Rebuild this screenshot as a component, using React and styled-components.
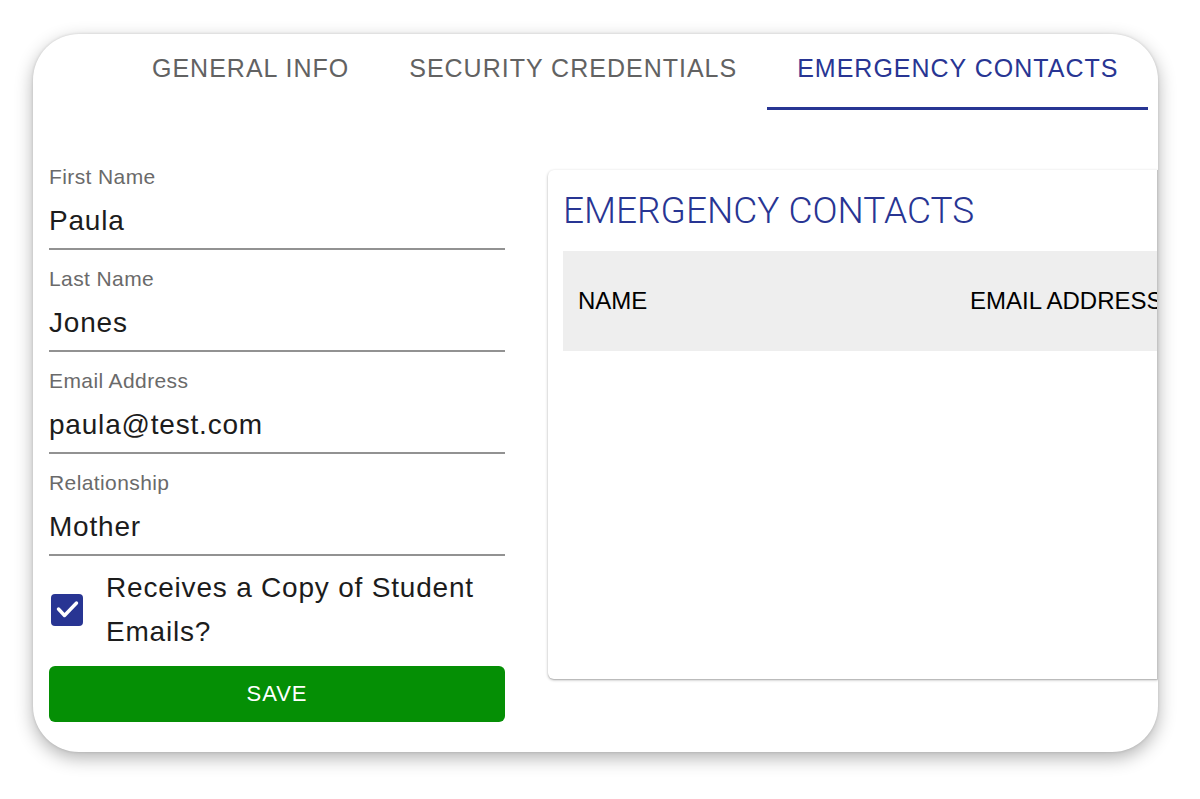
import React from 'react';
import styled, { createGlobalStyle } from 'styled-components';

const GlobalStyle = createGlobalStyle`
  html, body {
    margin: 0;
    padding: 0;
    background: #ffffff;
    font-family: "Liberation Sans", Arial, sans-serif;
  }
  * {
    box-sizing: border-box;
  }
`;

const Page = styled.div`
  padding: 34px 0 40px 33px;
`;

const Card = styled.div`
  width: 1125px;
  height: 718px;
  background: #fff;
  border-radius: 46px;
  overflow: hidden;
  box-shadow: 0 6px 18px rgba(0, 0, 0, 0.3), 0 0 3px rgba(0, 0, 0, 0.14);
  display: flex;
  flex-direction: column;
`;

const TabBar = styled.nav`
  display: flex;
  padding-left: 89px;
  height: 76px;
`;

const Tab = styled.div`
  padding: 20px 30px 0;
  height: 76px;
  font-size: 25px;
  line-height: 28px;
  letter-spacing: 1px;
  text-transform: uppercase;
  white-space: nowrap;
  color: ${(p) => (p.$active ? '#283593' : '#626262')};
  border-bottom: 3px solid ${(p) => (p.$active ? '#283593' : 'transparent')};
`;

const Content = styled.div`
  display: flex;
  align-items: flex-start;
  gap: 43px;
  padding: 55px 0 0 16px;
`;

const FormColumn = styled.form`
  width: 456px;
  flex-shrink: 0;
  display: flex;
  flex-direction: column;
`;

const Fields = styled.div`
  display: flex;
  flex-direction: column;
  gap: 17px;
`;

const Field = styled.label`
  display: block;
  border-bottom: 2px solid #929292;
`;

const FieldLabel = styled.div`
  font-size: 21px;
  line-height: 24px;
  letter-spacing: 0.4px;
  color: #6a6a6a;
`;

const FieldValue = styled.div`
  font-size: 28px;
  line-height: 32px;
  letter-spacing: 0.8px;
  color: #1c1c1c;
  padding: 16px 0 11px;
`;

const CheckRow = styled.div`
  display: flex;
  align-items: center;
  gap: 23px;
  margin-top: 10px;
  padding-left: 2px;
`;

const CheckBox = styled.span`
  width: 32px;
  height: 32px;
  flex-shrink: 0;
  border-radius: 4px;
  background: #283593;
  display: flex;
  align-items: center;
  justify-content: center;
`;

const CheckText = styled.span`
  font-size: 28px;
  line-height: 44px;
  letter-spacing: 0.8px;
  color: #1c1c1c;
`;

const SaveButton = styled.button`
  margin-top: 12px;
  height: 56px;
  width: 100%;
  border: none;
  border-radius: 6px;
  background: #058f05;
  color: #fff;
  font-family: "Liberation Sans", Arial, sans-serif;
  font-size: 22px;
  letter-spacing: 1px;
  text-transform: uppercase;
`;

/* the contacts panel runs off the card's right side, so its own right corners stay square */
const Panel = styled.section`
  flex: 1;
  margin-top: 5px;
  height: 509px;
  background: #fff;
  border-radius: 6px 0 0 6px;
  box-shadow: 0 1px 3px rgba(0, 0, 0, 0.3), 0 1px 1px rgba(0, 0, 0, 0.1);
  border-right: 1px solid #c4c4c4;
  overflow: hidden;
  padding: 20px 0 0 15px;
`;

const PanelTitle = styled.h2`
  margin: 0;
  font-family: Roboto, "Liberation Sans", sans-serif;
  font-weight: 300;
  font-size: 37px;
  line-height: 42px;
  color: #283593;
  white-space: nowrap;
`;

const HeaderRow = styled.div`
  margin-top: 19px;
  width: 900px;
  height: 100px;
  background: #eeeeee;
  display: grid;
  grid-template-columns: 392px 1fr;
  align-items: center;
`;

const HeaderCell = styled.div`
  padding-left: 15px;
  font-size: 24px;
  line-height: 24px;
  color: #000;
  white-space: nowrap;
`;

const fields = [
  { label: 'First Name', value: 'Paula' },
  { label: 'Last Name', value: 'Jones' },
  { label: 'Email Address', value: 'paula@test.com' },
  { label: 'Relationship', value: 'Mother' },
];

export default function App() {
  return (
    <>
      <GlobalStyle />
      <Page>
        <Card>
          <TabBar>
            <Tab>General Info</Tab>
            <Tab>Security Credentials</Tab>
            <Tab $active>Emergency Contacts</Tab>
          </TabBar>
          <Content>
            <FormColumn onSubmit={(e) => e.preventDefault()}>
              <Fields>
                {fields.map((f) => (
                  <Field key={f.label}>
                    <FieldLabel>{f.label}</FieldLabel>
                    <FieldValue>{f.value}</FieldValue>
                  </Field>
                ))}
              </Fields>
              <CheckRow>
                <CheckBox>
                  <svg width="32" height="32" viewBox="0 0 32 32">
                    <path
                      d="M7.5 15 L13.5 21.5 L25.5 9"
                      fill="none"
                      stroke="#fff"
                      strokeWidth="3.4"
                      strokeLinecap="round"
                      strokeLinejoin="round"
                    />
                  </svg>
                </CheckBox>
                <CheckText>Receives a Copy of Student Emails?</CheckText>
              </CheckRow>
              <SaveButton type="submit">Save</SaveButton>
            </FormColumn>
            <Panel>
              <PanelTitle>EMERGENCY CONTACTS</PanelTitle>
              <HeaderRow>
                <HeaderCell>NAME</HeaderCell>
                <HeaderCell>EMAIL ADDRESS</HeaderCell>
              </HeaderRow>
            </Panel>
          </Content>
        </Card>
      </Page>
    </>
  );
}
